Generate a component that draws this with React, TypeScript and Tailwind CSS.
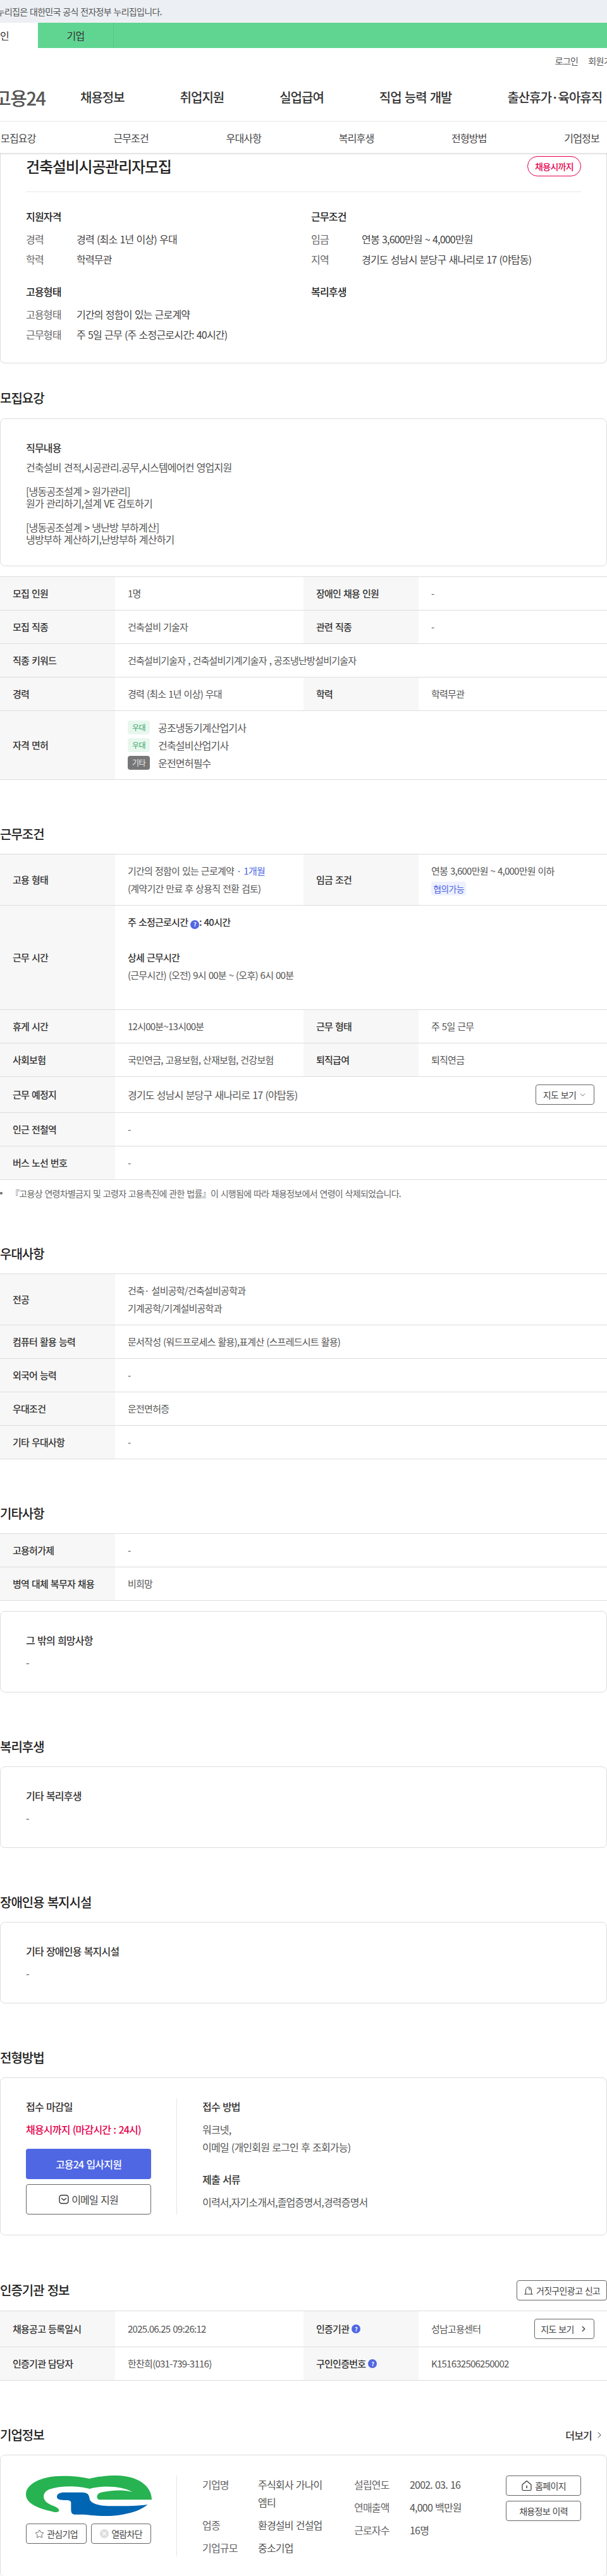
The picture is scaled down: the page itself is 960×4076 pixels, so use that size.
import type { ReactNode } from "react";
import { ChevronDown, ChevronRight, Star, X } from "lucide-react";

function Heading({ children }: { children: ReactNode }) {
  return <h2 className="text-[20px] leading-[30px] font-medium text-[#222]">{children}</h2>;
}

function Section({ title, children }: { title: string; children: ReactNode }) {
  return (
    <section className="mt-[71px]">
      <div className="mb-[16px]">
        <Heading>{title}</Heading>
      </div>
      {children}
    </section>
  );
}

function Label({ children }: { children: ReactNode }) {
  return (
    <div className="w-[182px] shrink-0 bg-[#f7f7f7] pl-5 flex items-center text-[15px] font-medium text-[#333]">
      {children}
    </div>
  );
}

function Row({ label, children }: { label: ReactNode; children: ReactNode }) {
  return (
    <div className="flex border-b border-[#ddd]">
      <Label>{label}</Label>
      <div className="flex-1 px-5 py-3 text-[15px] leading-7 text-[#555]">{children}</div>
    </div>
  );
}

function Row2({ l1, v1, l2, v2 }: { l1: ReactNode; v1: ReactNode; l2: ReactNode; v2: ReactNode }) {
  return (
    <div className="flex border-b border-[#ddd]">
      <Label>{l1}</Label>
      <div className="w-[298px] shrink-0 px-5 py-3 text-[15px] leading-7 text-[#555]">{v1}</div>
      <Label>{l2}</Label>
      <div className="flex-1 px-5 py-3 text-[15px] leading-7 text-[#555]">{v2}</div>
    </div>
  );
}

function Table({ children }: { children: ReactNode }) {
  return <div className="border-t border-[#ddd]">{children}</div>;
}

function SimpleCard({ title, className }: { title: string; className?: string }) {
  return (
    <div className={`rounded-lg border border-[#ddd] px-10 pt-8 pb-[33px] ${className ?? ""}`}>
      <div className="text-[16px] leading-[26px] font-medium text-[#333]">{title}</div>
      <div className="mt-2 text-[16px] leading-7 text-[#555]">-</div>
    </div>
  );
}

function Help() {
  return (
    <span className="inline-flex w-[14px] h-[14px] rounded-full bg-[#4f67e3] text-white text-[9px] leading-none font-bold items-center justify-center align-[-1px]">
      ?
    </span>
  );
}

function License({ tone, name, text }: { tone: "green" | "gray"; name: string; text: string }) {
  return (
    <div className="flex items-center gap-[13px] h-[22px]">
      <span
        className={`w-[35px] h-[22px] rounded-[4px] text-[12px] leading-[22px] text-center ${
          tone === "green" ? "bg-[#e8f7ee] text-[#37a465]" : "bg-[#777] text-[#eee]"
        }`}
      >
        {name}
      </span>
      <span className="text-[16px] leading-[22px] text-[#555]">{text}</span>
    </div>
  );
}

function MailIcon() {
  return (
    <svg width="16" height="16" viewBox="0 0 16 16" fill="none" stroke="#333" strokeWidth="1.4" strokeLinecap="round" strokeLinejoin="round">
      <rect x="1" y="1.5" width="14" height="13" rx="3.5" />
      <path d="M4.5 6.5 8 9.5l3.5-3" />
    </svg>
  );
}

function SirenIcon() {
  return (
    <svg width="16" height="16" viewBox="0 0 16 16" fill="none" stroke="#444" strokeWidth="1.1" strokeLinecap="round" strokeLinejoin="round">
      <path d="M3.5 14V7.5a4.5 4.5 0 0 1 9 0V14" />
      <path d="M1.5 14h13" />
      <path d="M8 5.2a2.2 2.2 0 0 1 2.2 2.2" />
    </svg>
  );
}

function HomeIcon() {
  return (
    <svg width="18" height="18" viewBox="0 0 18 18" fill="none" stroke="#333" strokeWidth="1.2" strokeLinecap="round" strokeLinejoin="round">
      <path d="M2 7.5 9 1.5l7 6V15a1.5 1.5 0 0 1-1.5 1.5h-11A1.5 1.5 0 0 1 2 15Z" />
      <path d="M9 9.5v3" strokeWidth="1.5" />
    </svg>
  );
}

function CompanyLogo() {
  return (
    <svg width="199" height="64" viewBox="18 20 597 192" aria-label="기업 로고">
      <path
        fill="#27b352"
        d="M18 110C18 60 90 22 190 22C250 22 290 28 320 35C350 26 400 20 450 20C550 22 615 70 615 135L370 135C350 135 350 105 375 100C420 90 490 85 525 100C480 70 380 65 320 83C270 70 190 65 130 85C95 100 95 130 120 150C140 165 175 170 175 185C175 197 155 195 140 190C70 175 18 150 18 110Z"
      />
      <path
        fill="#0066b3"
        d="M165 120C165 105 185 100 200 100L285 100C310 100 318 110 320 130C325 155 370 165 430 165C500 165 550 165 595 158C560 190 480 212 400 212C340 212 310 205 280 205L250 205C235 205 232 195 232 180L232 150C232 140 225 138 210 137C180 137 165 135 165 120Z"
      />
    </svg>
  );
}

function Pair({ label, children }: { label: string; children: ReactNode }) {
  return (
    <div className="flex text-[16px] leading-[24px]">
      <span className="w-[80px] shrink-0 text-[#666]">{label}</span>
      <span className="text-[#444]">{children}</span>
    </div>
  );
}

function CompanyRow({ label, children }: { label: string; children: ReactNode }) {
  return (
    <div className="flex text-[16px] leading-7">
      <span className="w-[88px] shrink-0 text-[#666]">{label}</span>
      <span className="text-[#555]">{children}</span>
    </div>
  );
}

export default function App() {
  return (
    <div className="w-[960px] overflow-hidden bg-white text-[#333] [font-family:'Noto_Sans_CJK_KR',sans-serif] [&_*]:tracking-[-0.05em] [&_*]:[word-spacing:0.08em]">
      <div className="h-9 bg-[#ecf0f4] text-[14px] leading-9 text-[#555] whitespace-nowrap pl-0">
        <span className="block -ml-[21px]">이 누리집은 대한민국 공식 전자정부 누리집입니다.</span>
      </div>
      <div className="flex h-10 bg-[#60d592] text-[16px]">
        <div className="w-[60px] bg-white leading-10 text-[#333] overflow-hidden whitespace-nowrap">
          <span className="block -ml-[14px]">개인</span>
        </div>
        <div className="w-[120px] border-r border-[#55c585] text-center leading-10 text-[#333]">기업</div>
      </div>

      <header className="bg-white">
        <div className="flex justify-end gap-4 pt-2 -mr-[19px] text-[14px] leading-6 text-[#555]">
          <span>로그인</span>
          <span>회원가입</span>
        </div>
        <div className="flex items-center mt-[31px] mb-[23px] h-[30px] whitespace-nowrap">
          <span className="-ml-[9px] w-[136px] shrink-0 text-[29px] leading-[30px] font-medium text-[#555]">고용24</span>
          <nav className="flex gap-[88px] text-[20px] leading-[30px] font-medium text-[#333]">
            <span>채용정보</span>
            <span>취업지원</span>
            <span>실업급여</span>
            <span>직업 능력 개발</span>
            <span>출산휴가·육아휴직</span>
          </nav>
        </div>
      </header>

      <nav className="relative z-10 flex h-[50px] items-center justify-between border-t border-[#eee] bg-white pl-px pr-3 text-[16px] text-[#444] shadow-[0_1px_3px_rgba(0,0,0,0.2)]">
        <span>모집요강</span>
        <span>근무조건</span>
        <span>우대사항</span>
        <span>복리후생</span>
        <span>전형방법</span>
        <span>기업정보</span>
      </nav>

      <main>
        <div className="rounded-b-lg border border-t-0 border-[#ddd] px-10 pt-[5px] pb-[33px]">
          <div className="flex items-center justify-between h-[32px]">
            <h1 className="text-[24px] leading-8 font-medium text-[#222]">건축설비시공관리자모집</h1>
            <span className="w-[85px] h-[32px] rounded-full border border-[#e6004c] text-center text-[14px] leading-[30px] font-medium text-[#e6004c]">
              채용시까지
            </span>
          </div>
          <div className="mt-6 border-t border-[#e8e8e8] pt-[26px] grid grid-cols-[451px_1fr] gap-y-[27px]">
            <div>
              <h3 className="text-[16px] leading-6 font-medium text-[#222]">지원자격</h3>
              <div className="mt-3 space-y-2">
                <Pair label="경력">경력 (최소 1년 이상) 우대</Pair>
                <Pair label="학력">학력무관</Pair>
              </div>
            </div>
            <div>
              <h3 className="text-[16px] leading-6 font-medium text-[#222]">근무조건</h3>
              <div className="mt-3 space-y-2">
                <Pair label="임금">연봉 3,600만원 ~ 4,000만원</Pair>
                <Pair label="지역">경기도 성남시 분당구 새나리로 17 (야탑동)</Pair>
              </div>
            </div>
            <div>
              <h3 className="text-[16px] leading-6 font-medium text-[#222]">고용형태</h3>
              <div className="mt-3 space-y-2">
                <Pair label="고용형태">기간의 정함이 있는 근로계약</Pair>
                <Pair label="근무형태">주 5일 근무 (주 소정근로시간: 40시간)</Pair>
              </div>
            </div>
            <div>
              <h3 className="text-[16px] leading-6 font-medium text-[#222]">복리후생</h3>
            </div>
          </div>
        </div>

        <section className="mt-10">
          <div className="mb-[17px]">
            <Heading>모집요강</Heading>
          </div>
          <div className="rounded-lg border border-[#ddd] px-10 pt-8 pb-[32px]">
            <div className="text-[16px] leading-[26px] font-medium text-[#333]">직무내용</div>
            <div className="mt-[9px] text-[16px] leading-[19px] text-[#555] whitespace-pre-line">
              {"건축설비 견적,시공관리.공무,시스템에어컨 영업지원\n\n[냉동공조설계 > 원가관리]\n원가 관리하기,설계 VE 검토하기\n\n[냉동공조설계 > 냉난방 부하계산]\n냉방부하 계산하기,난방부하 계산하기"}
            </div>
          </div>
          <div className="mt-4">
            <Table>
              <Row2 l1="모집 인원" v1="1명" l2="장애인 채용 인원" v2="-" />
              <Row2 l1="모집 직종" v1="건축설비 기술자" l2="관련 직종" v2="-" />
              <Row label="직종 키워드">건축설비기술자 , 건축설비기계기술자 , 공조냉난방설비기술자</Row>
              <Row2 l1="경력" v1="경력 (최소 1년 이상) 우대" l2="학력" v2="학력무관" />
              <div className="flex border-b border-[#ddd]">
                <Label>자격 면허</Label>
                <div className="flex-1 px-5 py-[15px] space-y-[6px]">
                  <License tone="green" name="우대" text="공조냉동기계산업기사" />
                  <License tone="green" name="우대" text="건축설비산업기사" />
                  <License tone="gray" name="기타" text="운전면허필수" />
                </div>
              </div>
            </Table>
          </div>
        </section>

        <Section title="근무조건">
          <Table>
            <Row2
              l1="고용 형태"
              v1={
                <>
                  기간의 정함이 있는 근로계약 <span className="text-[#4f67e3]">· 1개월</span>
                  <br />
                  (계약기간 만료 후 상용직 전환 검토)
                </>
              }
              l2="임금 조건"
              v2={
                <>
                  연봉 3,600만원 ~ 4,000만원 이하
                  <br />
                  <span className="inline-block h-[22px] w-[55px] rounded-[4px] bg-[#eef1ff] text-center text-[14px] leading-[22px] text-[#4f67e3] align-top mt-[3px]">협의가능</span>
                </>
              }
            />
            <Row label="근무 시간">
              <div className="font-medium text-[#333]">
                주 소정근로시간 <Help />: 40시간
              </div>
              <div className="h-7" />
              <div className="font-medium text-[#333]">상세 근무시간</div>
              <div>(근무시간) (오전) 9시 00분 ~ (오후) 6시 00분</div>
              <div className="h-7" />
            </Row>
            <Row2 l1="휴게 시간" v1="12시00분~13시00분" l2="근무 형태" v2="주 5일 근무" />
            <Row2 l1="사회보험" v1="국민연금, 고용보험, 산재보험, 건강보험" l2="퇴직급여" v2="퇴직연금" />
            <Row label="근무 예정지">
              <div className="flex items-center justify-between">
                <span className="text-[16px]">경기도 성남시 분당구 새나리로 17 (야탑동)</span>
                <button className="flex h-8 w-[93px] items-center justify-center gap-1 rounded border border-[#666] text-[14px] text-[#444]">
                  지도 보기 <ChevronDown size={13} strokeWidth={1.5} />
                </button>
              </div>
            </Row>
            <Row label="인근 전철역">-</Row>
            <Row label="버스 노선 번호">-</Row>
          </Table>
          <div className="mt-[11px] flex items-center gap-[13px] text-[14px] leading-5 text-[#666]">
            <span className="h-1 w-1 shrink-0 rounded-full bg-[#666]" />
            <span>『고용상 연령차별금지 및 고령자 고용촉진에 관한 법률』이 시행됨에 따라 채용정보에서 연령이 삭제되었습니다.</span>
          </div>
        </Section>

        <Section title="우대사항">
          <Table>
            <Row label="전공">
              건축· 설비공학/건축설비공학과
              <br />
              기계공학/기계설비공학과
            </Row>
            <Row label="컴퓨터 활용 능력">문서작성 (워드프로세스 활용),표계산 (스프레드시트 활용)</Row>
            <Row label="외국어 능력">-</Row>
            <Row label="우대조건">운전면허증</Row>
            <Row label="기타 우대사항">-</Row>
          </Table>
        </Section>

        <Section title="기타사항">
          <Table>
            <Row label="고용허가제">-</Row>
            <Row label="병역 대체 복무자 채용">비희망</Row>
          </Table>
          <SimpleCard title="그 밖의 희망사항" className="mt-4" />
        </Section>

        <Section title="복리후생">
          <SimpleCard title="기타 복리후생" />
        </Section>

        <Section title="장애인용 복지시설">
          <SimpleCard title="기타 장애인용 복지시설" />
        </Section>

        <Section title="전형방법">
          <div className="flex rounded-lg border border-[#ddd] px-10 pt-8 pb-8">
            <div className="w-[239px] shrink-0 border-r border-[#e5e5e5] pr-10">
              <div className="text-[16px] leading-[26px] font-medium text-[#333]">접수 마감일</div>
              <div className="mt-[9px] text-[16px] leading-7 font-medium text-[#e6004c]">채용시까지 (마감시간 : 24시)</div>
              <button className="mt-[17px] block h-12 w-full rounded bg-[#4f67e3] text-[16px] font-medium text-white">고용24 입사지원</button>
              <button className="mt-2 flex h-12 w-full items-center justify-center gap-1 rounded border border-[#666] text-[16px] text-[#444]">
                <MailIcon />
                이메일 지원
              </button>
            </div>
            <div className="pl-10 text-[16px] leading-7 text-[#555]">
              <div className="leading-[26px] font-medium text-[#333]">접수 방법</div>
              <div className="mt-[9px]">
                워크넷,
                <br />
                이메일 (개인회원 로그인 후 조회가능)
              </div>
              <div className="mt-6 leading-[26px] font-medium text-[#333]">제출 서류</div>
              <div className="mt-[9px]">이력서,자기소개서,졸업증명서,경력증명서</div>
            </div>
          </div>
        </Section>

        <section className="mt-[71px]">
          <div className="mb-[16px] flex items-center justify-between">
            <Heading>인증기관 정보</Heading>
            <button className="flex h-8 w-[143px] items-center justify-center gap-1 rounded border border-[#666] text-[14px] text-[#444]">
              <SirenIcon />
              거짓구인광고 신고
            </button>
          </div>
          <Table>
            <Row2
              l1="채용공고 등록일시"
              v1={<span className="block py-0.5 leading-7">2025.06.25 09:26:12</span>}
              l2={
                <span className="flex items-center gap-1">
                  인증기관 <Help />
                </span>
              }
              v2={
                <div className="flex items-center justify-between">
                  <span>성남고용센터</span>
                  <button className="flex h-8 w-[95px] items-center justify-center gap-2 rounded border border-[#666] text-[14px] text-[#444]">
                    지도 보기 <ChevronRight size={14} strokeWidth={2.5} />
                  </button>
                </div>
              }
            />
            <Row2
              l1="인증기관 담당자"
              v1="한찬희(031-739-3116)"
              l2={
                <span className="flex items-center gap-1">
                  구인인증번호 <Help />
                </span>
              }
              v2="K151632506250002"
            />
          </Table>
        </section>

        <section className="mt-[71px]">
          <div className="mb-[16px] flex items-center justify-between pr-1">
            <Heading>기업정보</Heading>
            <span className="flex items-center gap-1 text-[16px] font-medium text-[#333]">
              더보기 <ChevronRight size={16} strokeWidth={1.5} />
            </span>
          </div>
          <div className="flex rounded-lg border border-[#ddd] px-10 pt-8 pb-8">
            <div className="w-[239px] shrink-0 border-r border-[#e5e5e5] pr-10">
              <CompanyLogo />
              <div className="mt-3 flex justify-between">
                <button className="flex h-8 w-[96px] items-center justify-center gap-1 rounded border border-[#666] text-[14px] text-[#444]">
                  <Star size={15} strokeWidth={1.3} />
                  관심기업
                </button>
                <button className="flex h-8 w-[95px] items-center justify-center gap-1 rounded border border-[#666] text-[14px] text-[#444]">
                  <span className="flex h-[14px] w-[14px] items-center justify-center rounded-full bg-[#ddd] text-white">
                    <X size={10} strokeWidth={3} />
                  </span>
                  열람차단
                </button>
              </div>
            </div>
            <div className="w-[280px] shrink-0 space-y-2 pl-10">
              <CompanyRow label="기업명">
                <span className="block w-[115px]">주식회사 가나이 엠티</span>
              </CompanyRow>
              <CompanyRow label="업종">환경설비 건설업</CompanyRow>
              <CompanyRow label="기업규모">중소기업</CompanyRow>
            </div>
            <div className="w-[240px] shrink-0 space-y-2">
              <CompanyRow label="설립연도">2002. 03. 16</CompanyRow>
              <CompanyRow label="연매출액">4,000 백만원</CompanyRow>
              <CompanyRow label="근로자수">16명</CompanyRow>
            </div>
            <div className="flex-1 space-y-2">
              <button className="flex h-8 w-full items-center justify-center gap-1 rounded border border-[#666] text-[14px] text-[#444]">
                <HomeIcon />
                홈페이지
              </button>
              <button className="flex h-8 w-full items-center justify-center rounded border border-[#666] text-[14px] text-[#444]">채용정보 이력</button>
            </div>
          </div>
        </section>
      </main>
    </div>
  );
}
